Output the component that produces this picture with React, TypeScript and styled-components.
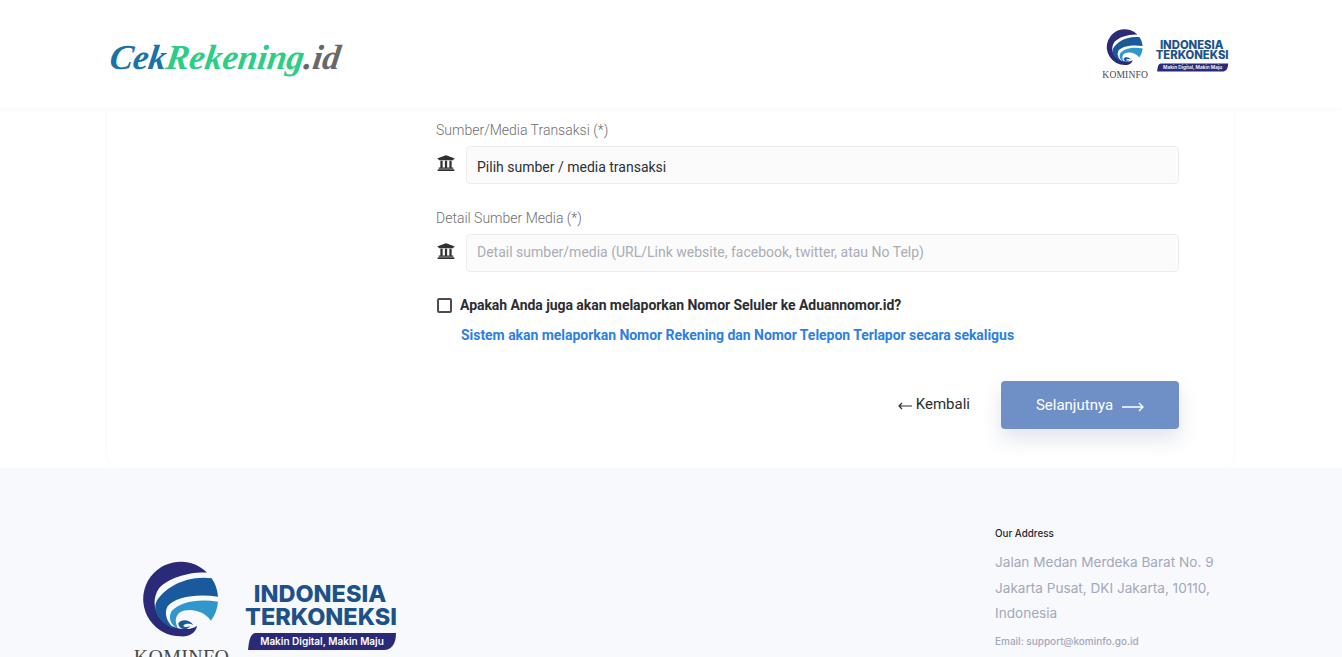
import React from "react";
import styled, { createGlobalStyle } from "styled-components";
import { FaUniversity } from "react-icons/fa";

const GlobalStyle = createGlobalStyle`
  html, body {
    margin: 0;
    height: 657px;
    overflow: hidden;
    background: #fff;
    font-family: "Roboto", "Liberation Sans", sans-serif;
  }
  * {
    box-sizing: border-box;
  }
`;

const Header = styled.header`
  height: 108px;
  display: flex;
  align-items: center;
  justify-content: space-between;
  padding: 0 113px 0 110px;
  background: #fff;
  box-shadow: 0 1px 4px rgba(40, 50, 90, 0.05);
  position: relative;
`;

const Brand = styled.div`
  font-family: "Liberation Serif", serif;
  font-style: italic;
  font-weight: 700;
  font-size: 35px;
  line-height: 1;
  transform: skewX(-8deg);
  margin-top: 6px;
`;

const BrandPart = styled.span<{ $color: string }>`
  color: ${(p) => p.$color};
`;

const HeaderLogo = styled.div`
  width: 127px;
  height: 60px;
  margin-top: 4px;
`;

const Card = styled.main`
  margin: 0 108px 0 107px;
  height: 360px;
  padding: 14px 55px 0 329px;
  background: #fff;
  border-radius: 0 0 14px 14px;
  box-shadow: 0 0 3px rgba(60, 70, 110, 0.06);
`;

const FieldLabel = styled.label`
  display: block;
  font-size: 14px;
  font-weight: 300;
  line-height: 17px;
  color: #6e6e6e;
  margin-bottom: 7px;
`;

const Field = styled.div`
  margin-bottom: 26px;
`;

const FieldRow = styled.div`
  display: flex;
  align-items: center;
  gap: 11px;
  color: #2f3033;
`;

const FieldIcon = styled.span`
  display: flex;
  width: 18px;
  font-size: 18px;
  margin: -4px 0 0 1px;
`;

const TextBox = styled.div<{ $placeholder?: boolean }>`
  flex: 1;
  height: 38px;
  display: flex;
  align-items: center;
  padding: ${(p) => (p.$placeholder ? "0 10px 3px" : "3px 10px 0")};
  font-size: 14px;
  color: ${(p) => (p.$placeholder ? "#a9adb4" : "#2d2f33")};
  background: #fbfbfc;
  border: 1px solid #ececef;
  border-radius: 4px;
`;

const CheckRow = styled.div`
  display: flex;
  align-items: center;
  gap: 8px;
  margin: -1px 0 0 1px;
  font-size: 14px;
  font-weight: 700;
  line-height: 17px;
  letter-spacing: -0.05px;
  color: #2b2d31;
`;

const CheckBox = styled.span`
  width: 15px;
  height: 15px;
  border: 2px solid #4d4d4d;
  border-radius: 2px;
`;

const Hint = styled.p`
  margin: 13px 0 0 25px;
  font-size: 14px;
  font-weight: 700;
  line-height: 17px;
  letter-spacing: -0.04px;
  color: #2d80e2;
`;

const Actions = styled.div`
  display: flex;
  align-items: center;
  justify-content: flex-end;
  gap: 31px;
  margin-top: 37px;
`;

const BackLink = styled.a`
  display: flex;
  align-items: center;
  gap: 4px;
  font-size: 15px;
  color: #2b2d31;
  margin-top: -3px;
`;

const BackArrow = styled.svg`
  width: 14px;
  height: 8px;
  margin-top: 5px;
`;

const NextButton = styled.button`
  width: 178px;
  height: 48px;
  display: flex;
  align-items: center;
  justify-content: center;
  gap: 9px;
  border: 0;
  border-radius: 4px;
  background: #6f8fc7;
  color: #fff;
  font-family: inherit;
  font-size: 15px;
  box-shadow: 0 10px 20px rgba(70, 90, 130, 0.16);
`;

const NextArrow = styled.svg`
  width: 22px;
  height: 10px;
  margin-top: 3px;
`;

const Footer = styled.footer`
  height: 189px;
  background: #f8f9fd;
  display: flex;
  justify-content: space-between;
  padding: 59px 118px 0 134px;
  overflow: hidden;
`;

const FooterLogo = styled.div`
  width: 263px;
  height: 125px;
  margin-top: 28px;
`;

const AddressColumn = styled.div`
  width: 229px;
  font-family: "Inter", "Open Sans", sans-serif;
`;

const AddressTitle = styled.div`
  font-size: 9.8px;
  font-weight: 500;
  line-height: 13px;
  color: #24262b;
  margin-bottom: 10px;
`;

const AddressText = styled.div`
  font-size: 13.6px;
  line-height: 25.5px;
  color: #a3a8b9;
`;

const AddressMail = styled.div`
  font-size: 10px;
  font-weight: 500;
  line-height: 13px;
  color: #a3a8b9;
  margin-top: 8px;
`;

const KominfoLogo: React.FC = () => (
  <svg viewBox="0 0 263 125" width="100%" height="100%" aria-label="Kominfo">
    <g transform="translate(1 0) scale(0.3333)">
      <path
        d="M216 53A112 112 0 1 0 137 244C162 246 184 232 186 212C172 224 140 226 115 215C70 198 40 150 72 100C100 68 165 50 216 53Z"
        fill="#2a2a78"
      />
      <path
        d="M230 70C150 60 88 100 64 140C52 170 75 205 118 222C100 205 85 180 97 155C120 125 185 116 249 125A112 112 0 0 0 230 70Z"
        fill="#1a5a9c"
      />
      <path
        d="M249 140C190 130 135 140 110 168C98 190 108 212 130 222C120 205 118 185 135 172C160 158 205 165 228 197A112 112 0 0 0 249 140Z"
        fill="#2f97cc"
      />
      <path
        d="M130 205C140 190 165 195 175 210C165 205 150 205 145 212C150 220 160 215 165 212C160 228 130 225 130 205Z"
        fill="#1a5a9c"
      />
    </g>
    <text x="47.5" y="109" textAnchor="middle" fontFamily="'Liberation Serif', serif" fontSize="20" letterSpacing="0.3" fill="#4a4a52">
      KOMINFO
    </text>
    <text x="186" y="47" textAnchor="middle" fontFamily="'Inter', sans-serif" fontWeight="800" fontSize="23.5" fill="#1d5289">
      INDONESIA
    </text>
    <text x="187" y="69.5" textAnchor="middle" fontFamily="'Inter', sans-serif" fontWeight="800" fontSize="23.5" fill="#1d5289">
      TERKONEKSI
    </text>
    <path d="M122 78H262C262 88 258 95 250 95H114C115 86 116 78 122 78Z" fill="#2b2a78" />
    <text x="188" y="90" textAnchor="middle" fontFamily="'Inter', sans-serif" fontWeight="600" fontSize="10" fill="#fff">
      Makin Digital, Makin Maju
    </text>
  </svg>
);

const App: React.FC = () => (
  <>
    <GlobalStyle />
    <Header>
      <Brand>
        <BrandPart $color="#1b72a8">Cek</BrandPart>
        <BrandPart $color="#2ccd85">Rekening</BrandPart>
        <BrandPart $color="#66686c">.id</BrandPart>
      </Brand>
      <HeaderLogo>
        <KominfoLogo />
      </HeaderLogo>
    </Header>
    <Card>
      <Field>
        <FieldLabel>Sumber/Media Transaksi (*)</FieldLabel>
        <FieldRow>
          <FieldIcon><FaUniversity /></FieldIcon>
          <TextBox>Pilih sumber / media transaksi</TextBox>
        </FieldRow>
      </Field>
      <Field>
        <FieldLabel>Detail Sumber Media (*)</FieldLabel>
        <FieldRow>
          <FieldIcon><FaUniversity /></FieldIcon>
          <TextBox $placeholder>Detail sumber/media (URL/Link website, facebook, twitter, atau No Telp)</TextBox>
        </FieldRow>
      </Field>
      <CheckRow>
        <CheckBox />
        Apakah Anda juga akan melaporkan Nomor Seluler ke Aduannomor.id?
      </CheckRow>
      <Hint>Sistem akan melaporkan Nomor Rekening dan Nomor Telepon Terlapor secara sekaligus</Hint>
      <Actions>
        <BackLink>
          <BackArrow viewBox="0 0 14 8">
            <path d="M14 4H1M4 1L1 4l3 3" fill="none" stroke="#2b2d31" strokeWidth="1.2" />
          </BackArrow>
          Kembali
        </BackLink>
        <NextButton>
          Selanjutnya
          <NextArrow viewBox="0 0 22 10">
            <path d="M0 5H21M17 1l4 4-4 4" fill="none" stroke="#fff" strokeWidth="1.3" />
          </NextArrow>
        </NextButton>
      </Actions>
    </Card>
    <Footer>
      <FooterLogo>
        <KominfoLogo />
      </FooterLogo>
      <AddressColumn>
        <AddressTitle>Our Address</AddressTitle>
        <AddressText>
          Jalan Medan Merdeka Barat No. 9
          <br />
          Jakarta Pusat, DKI Jakarta, 10110,
          <br />
          Indonesia
        </AddressText>
        <AddressMail>Email: support@kominfo.go.id</AddressMail>
      </AddressColumn>
    </Footer>
  </>
);

export default App;
